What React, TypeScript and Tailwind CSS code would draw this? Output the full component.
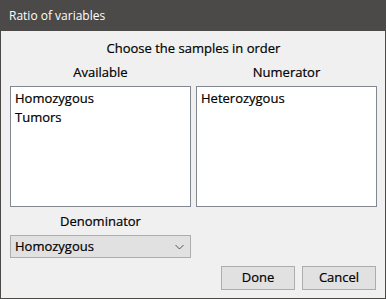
export default function App() {
  return (
    <div
      className="w-[386px] h-[299px] border border-[#4b4a48] bg-[#f0f0f0] flex flex-col text-black"
      style={{ fontFamily: '"Open Sans", "Noto Sans", sans-serif' }}
    >
      {/* title bar */}
      <div className="h-[30px] bg-[#4b4a48] text-white text-[12px] flex items-center pl-[8px] shrink-0">
        Ratio of variables
      </div>

      <div className="flex flex-col pl-[9px] pr-[8px] [-webkit-text-stroke:0.2px_black]">
        <div className="mt-[8px] h-[18px] text-center text-[13px] leading-[18px]">
          Choose the samples in order
        </div>

        <div className="mt-[6px] flex gap-[5px]">
          <div className="w-[181px] flex flex-col">
            <div className="h-[18px] text-center text-[13px] leading-[18px]">Available</div>
            <div className="mt-[5px] h-[121px] bg-white border border-[#828790] px-[4px] pt-[2px] text-[13px] leading-[19px]">
              <div>Homozygous</div>
              <div>Tumors</div>
            </div>
          </div>
          <div className="w-[181px] flex flex-col">
            <div className="h-[18px] text-center text-[13px] leading-[18px]">Numerator</div>
            <div className="mt-[5px] h-[121px] bg-white border border-[#828790] px-[4px] pt-[2px] text-[13px] leading-[19px]">
              <div>Heterozygous</div>
            </div>
          </div>
        </div>

        <div className="flex">
          <div className="w-[181px] flex flex-col">
            <div className="mt-[5px] h-[18px] text-center text-[13px] leading-[18px]">Denominator</div>
            <div className="mt-[5px] h-[23px] bg-[#e1e1e1] border border-[#adadad] flex items-center justify-between pl-[4px] pr-[6px] text-[13px]">
              <span>Homozygous</span>
              <svg width="9" height="6" viewBox="0 0 9 6" fill="none">
                <path d="M0.5 1 L4.5 5 L8.5 1" stroke="#555" strokeWidth="1" />
              </svg>
            </div>
          </div>
        </div>

        <div className="mt-[8px] flex justify-end gap-[7px] pr-[1px]">
          <button className="w-[74px] h-[24px] bg-[#e1e1e1] border border-[#adadad] text-[13px]">Done</button>
          <button className="w-[74px] h-[24px] bg-[#e1e1e1] border border-[#adadad] text-[13px]">Cancel</button>
        </div>
      </div>
    </div>
  );
}
